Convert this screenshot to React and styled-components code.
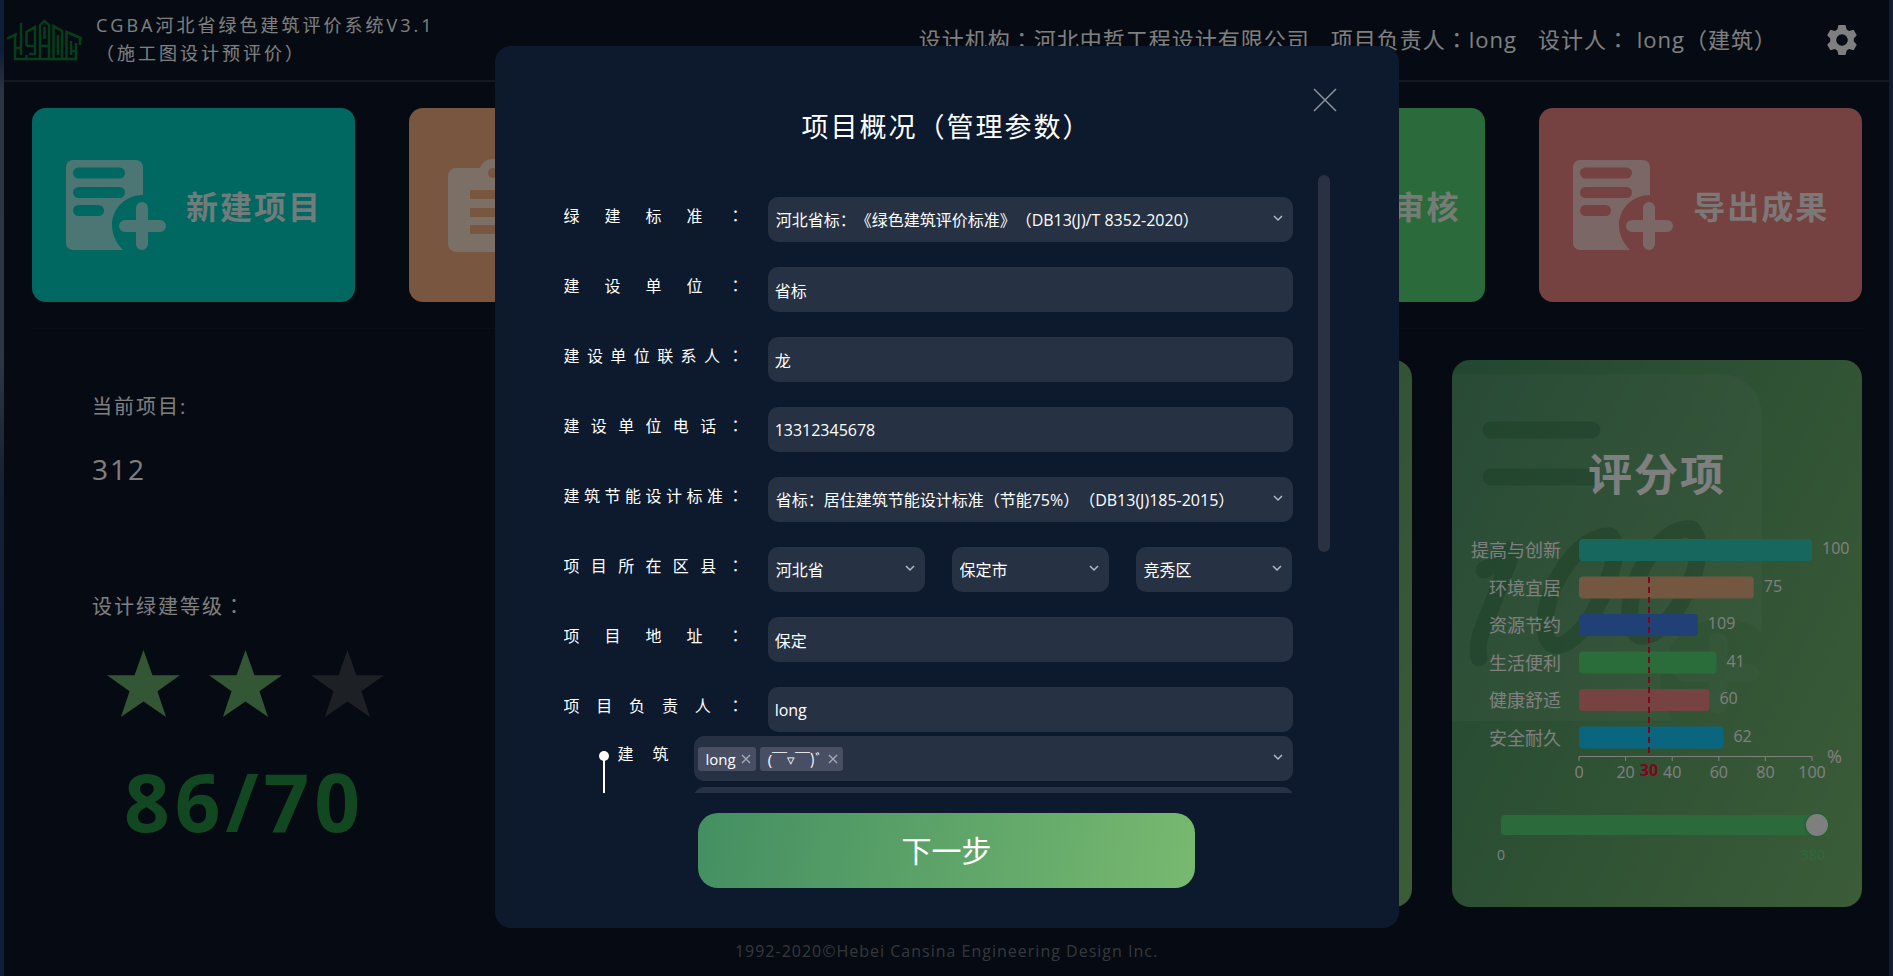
import React, { useState } from "react";
import styled, { createGlobalStyle } from "styled-components";

const GlobalStyle = createGlobalStyle`
  * { box-sizing: border-box; }
  body {
    margin: 0;
    color: #fff;
    background: #0a1426;
    font-family: "Open Sans", "Noto Sans CJK SC", sans-serif;
    font-size: 16px;
    text-spacing-trim: space-all;
  }
  button, input, select { font: inherit; color: inherit; }
  h1, h2, p { margin: 0; font-weight: inherit; }
`;

const Page = styled.div`
  min-height: 100vh;
  padding: 0 4px;
  background:
    linear-gradient(#1c3a70 0, #1c3a70 50px, #56687e 90px, #5c6c84 360px, #2a4468 480px, #203e70 620px) left / 4px 100% no-repeat,
    #1e3862;
`;

const Shell = styled.div`
  display: flex;
  flex-direction: column;
  min-height: 100vh;
  background: #0a1426;
`;

const Header = styled.header`
  display: flex;
  align-items: center;
  height: 82px;
  padding: 0 32px 0 3px;
  border-bottom: 2px solid #2a303c;
`;

const Brand = styled.h1`
  margin-left: 13px;
  font-size: 18px;
  line-height: 27px;
  letter-spacing: 3px;
  padding-bottom: 2px;
`;

const Facts = styled.div`
  display: flex;
  gap: 21px;
  margin-left: auto;
  padding-bottom: 3px;
  font-size: 22px;
  line-height: 32px;
  letter-spacing: 1px;
  white-space: nowrap;
`;

const IconButton = styled.button`
  display: flex;
  padding: 0;
  border: 0;
  background: none;
  cursor: pointer;
`;

const SettingsButton = styled(IconButton)`
  margin-left: 50px;
`;

const Centered = styled.span`
  font-family: "Noto Sans CJK TC", sans-serif;
`;

/* Full-width marks sit in the middle of their cell. */
function Txt({ children }) {
  return children.split(/([（）：])/).map((part, i) =>
    i % 2 ? <Centered key={i}>{part}</Centered> : part
  );
}

const Actions = styled.nav`
  display: flex;
  gap: 54px;
  margin: 26px 27px 0 28px;
  padding-bottom: 26px;
  border-bottom: 1px solid #131c2e;
`;

const ActionCard = styled.button`
  flex: 1 1 0;
  min-width: 0;
  display: flex;
  align-items: center;
  gap: 20px;
  height: 194px;
  padding: 0 0 0 34px;
  border: 0;
  border-radius: 14px;
  background: ${(p) => p.$color};
  color: rgba(255, 255, 255, 0.88);
  font-size: 32px;
  font-weight: 700;
  letter-spacing: 2px;
  white-space: nowrap;
  cursor: pointer;
  svg { flex: none; }
`;

const Board = styled.main`
  display: grid;
  grid-template-columns: minmax(0, 480fr) repeat(3, minmax(0, 410fr));
  gap: 40px;
  margin: 31px 27px 0 28px;
`;

const Summary = styled.section`
  padding: 33px 0 0 60px;
  letter-spacing: 2px;
`;

const Caption = styled.p`
  font-size: 20px;
  line-height: 28px;
`;

const ProjectName = styled.p`
  margin: 28px 0 103px;
  font-size: 28px;
  line-height: 40px;
`;

const Stars = styled.div`
  display: flex;
  gap: 29px;
  margin: 29px 0 0 15px;
`;

const Points = styled.p`
  margin: 44px 0 0 32px;
  color: #249042;
  font-size: 80px;
  font-weight: 700;
  line-height: 80px;
  letter-spacing: 5px;
`;

const ScoreCard = styled.section`
  position: relative;
  height: 547px;
  overflow: hidden;
  border-radius: 18px;
  background: linear-gradient(115deg, #448f62, #78b970);
`;

const Watermark = styled.svg`
  position: absolute;
  left: 0;
  top: 14px;
`;

const ScoreBody = styled.div`
  position: relative;
  padding-top: 84px;
`;

const ScoreTitle = styled.h2`
  font-size: 44px;
  font-weight: 700;
  line-height: 60px;
  letter-spacing: 2px;
  text-align: center;
`;

const Chart = styled.svg`
  display: block;
  width: 100%;
  margin-top: 25px;
  font-size: 16px;
`;

const SliderBox = styled.div`
  margin: 28px 34px 0 49px;
`;

const Range = styled.input`
  display: block;
  width: 100%;
  height: 24px;
  margin: 0;
  appearance: none;
  background: none;
  &::-webkit-slider-runnable-track {
    height: 20px;
    border-radius: 4px;
    background: #56d476;
  }
  &::-webkit-slider-thumb {
    appearance: none;
    width: 22px;
    height: 22px;
    margin-top: -1px;
    border-radius: 50%;
    background: #fff;
    box-shadow: 0 0 2px 1px #40c060;
  }
`;

const RangeEnds = styled.div`
  display: flex;
  justify-content: space-between;
  margin: 8px 3px 0 -4px;
  font-size: 14px;
  line-height: 20px;
`;

const RangeMax = styled.span`
  color: #56d476;
`;

const Footer = styled.footer`
  margin-top: auto;
  padding: 32px 0 14px;
  color: rgba(255, 255, 255, 0.4);
  font-size: 16px;
  line-height: 24px;
  letter-spacing: 1px;
  text-align: center;
`;

const Backdrop = styled.div`
  position: fixed;
  inset: 0;
  display: flex;
  align-items: center;
  justify-content: center;
  padding-bottom: 2px;
  background: rgba(0, 0, 0, 0.5);
`;

const Dialog = styled.form`
  position: relative;
  display: flex;
  flex-direction: column;
  align-items: center;
  width: 904px;
  max-width: 96vw;
  height: 882px;
  max-height: 96vh;
  padding-bottom: 40px;
  border-radius: 16px;
  background: #0d1a2d;
`;

const CloseButton = styled(IconButton)`
  position: absolute;
  right: 62px;
  top: 42px;
`;

const DialogTitle = styled.h2`
  margin: 60px 0 28px;
  font-size: 27px;
  line-height: 40px;
  letter-spacing: 2px;
`;

const ScrollRow = styled.div`
  flex: 1;
  min-height: 0;
  display: flex;
  gap: 25px;
  width: 100%;
  padding: 0 69px;
`;

const Fields = styled.div`
  flex: 1;
  min-width: 0;
  padding-top: 22px;
  overflow: hidden;
`;

const Thumb = styled.div`
  flex: none;
  width: 12px;
  height: 61%;
  border-radius: 6px;
  background: #2a3143;
`;

const Row = styled.div`
  display: flex;
  justify-content: space-between;
  height: 45px;
  margin-bottom: 25px;
`;

const Label = styled.label`
  width: ${(p) => p.$width || 180}px;
  line-height: 36px;
  text-align: justify;
  text-align-last: justify;
  white-space: nowrap;
`;

const Control = styled.div`
  display: flex;
  gap: 27px;
  width: 72%;
`;

const fieldBox = `
  width: 100%;
  height: 45px;
  border: 0;
  border-radius: 10px;
  outline: 0;
  background: #263143;
`;

const TextInput = styled.input`
  ${fieldBox}
  padding: 0 7px;
`;

const SelectWrap = styled.div`
  position: relative;
  flex: 1;
  min-width: 0;
`;

const NativeSelect = styled.select`
  ${fieldBox}
  appearance: none;
  padding: 0 30px 0 8px;
`;

const Arrow = styled.svg`
  position: absolute;
  right: 10px;
  top: 18px;
  pointer-events: none;
`;

const Team = styled.section`
  display: flex;
  justify-content: space-between;
  margin-top: -21px;
  padding-left: 35px;
`;

const Rail = styled.div`
  width: 10px;
  margin-top: 15px;
  background: linear-gradient(#fff, #fff) center / 2px 100% no-repeat;
  &::before {
    content: "";
    display: block;
    width: 10px;
    height: 10px;
    border-radius: 50%;
    background: #fff;
  }
`;

const Members = styled.div`
  flex: 1;
  margin-left: 9px;
  display: flex;
  flex-direction: column;
  gap: 6px;
`;

const MemberRow = styled.div`
  display: flex;
  justify-content: space-between;
`;

const TagField = styled.div`
  ${fieldBox}
  position: relative;
  display: flex;
  align-items: center;
  gap: 4px;
  width: 599px;
  margin-left: auto;
  padding: 0 30px 0 4px;
`;

const Tag = styled.span`
  flex: none;
  display: flex;
  align-items: center;
  gap: 5px;
  height: 24px;
  padding: 0 5px 0 8px;
  border-radius: 3px;
  background: #484f65;
  font-size: 15px;
  line-height: 24px;
  white-space: nowrap;
`;

const TagInput = styled.input`
  flex: 1;
  min-width: 0;
  border: 0;
  outline: 0;
  background: none;
`;

const NextButton = styled.button`
  flex: none;
  width: 55%;
  height: 75px;
  margin-top: 20px;
  border: 0;
  border-radius: 20px;
  background: linear-gradient(100deg, #448f62, #78b970);
  font-size: 30px;
  line-height: 40px;
  cursor: pointer;
`;

function Logo() {
  return (
    <svg width="76" height="42" viewBox="0 0 76 42" fill="none" stroke="#0c7c34" strokeWidth="2.5" aria-hidden="true">
      <path d="M0 19.500L10 15M14 4V36M8 16V40H69V32M8 29H14M19.500 36V41M19.500 27V13L28 8V35H22M19.500 27H28M33 40V6L37.500 2L42 6V40M33 27H42M37.500 8V20M46.500 40V7L55 12V40M51 16V36M59.500 40V13L75 19.500M64 22V36M73 19V26M69 24V32H64" />
    </svg>
  );
}

function GearIcon() {
  return (
    <svg width="30" height="32" viewBox="0 0 30 32" aria-hidden="true">
      <path
        fill="#fff"
        fillRule="evenodd"
        d="M11.5 1h7l1.2 4.6 2.4 1.4 4.5-1.3 3.2 5.6-3 3.2v3l3 3.2-3.2 5.6-4.5-1.3-2.4 1.4-1.2 4.6h-7l-1.2-4.6L7.900 25l-4.500 1.300L.2 20.700l3-3.200v-3l-3-3.200 3.200-5.600L7.900 7l2.400-1.400zM15 10.200a5.800 5.800 0 1 0 0 11.600 5.800 5.800 0 0 0 0-11.600z"
      />
    </svg>
  );
}

function DocPlusIcon({ width = 100 }) {
  return (
    <svg width={width} height="90" viewBox="0 0 100 90" fill="#fff" fillOpacity="0.6" aria-hidden="true">
      <path
        fillRule="evenodd"
        d="M7 0h63a7 7 0 0 1 7 7v28C60 35 46 48 46 65c0 9 4 18 11 25H7a7 7 0 0 1-7-7V7a7 7 0 0 1 7-7zM12.500 7.500a5.500 5.500 0 0 0 0 11h41a5.500 5.500 0 0 0 0-11zM12.500 27a5.500 5.500 0 0 0 0 11h41a5.500 5.500 0 0 0 0-11zM12.500 45a5.500 5.500 0 0 0 0 11h20a5.500 5.500 0 0 0 0-11z"
      />
      <path d="M70 48a6 6 0 0 1 12 0v12h12a6 6 0 0 1 0 12H82v12a6 6 0 0 1-12 0V72H59a6 6 0 0 1 0-12h11z" />
    </svg>
  );
}

function ClipboardIcon() {
  return (
    <svg width="100" height="93" viewBox="-5 0 100 93" fill="#fff" fillOpacity="0.6" aria-hidden="true">
      <path
        fillRule="evenodd"
        d="M8 9h24C34 3 39 0 45 0s11 3 13 9h24a8 8 0 0 1 8 8v68a8 8 0 0 1-8 8H8a8 8 0 0 1-8-8V17a8 8 0 0 1 8-8zM45 9a5 5 0 1 0 0 10 5 5 0 0 0 0-10zM22 31v9h46v-9zM22 49v9h46v-9zM22 66v9h46v-9z"
      />
    </svg>
  );
}

function Star({ on }) {
  return (
    <svg width="73" height="67" viewBox="0 0 220 202" preserveAspectRatio="none" aria-hidden="true">
      <polygon
        fill={on ? "#66ac6a" : "#3b4048"}
        points="110,0 137,76 220,76 152,124 178,202 110,155 42,202 68,124 0,76 83,76"
      />
    </svg>
  );
}

const BARS = [
  { name: "提高与创新", value: 100, share: 100, color: "#2fcebe" },
  { name: "环境宜居", value: 75, share: 75, color: "#e8ae80" },
  { name: "资源节约", value: 109, share: 51, color: "#4080ec" },
  { name: "生活便利", value: 41, share: 59, color: "#56d876" },
  { name: "健康舒适", value: 60, share: 56, color: "#ec8684" },
  { name: "安全耐久", value: 62, share: 62, color: "#14ccff" },
];

function ScoreChart() {
  const x0 = 127;
  const scale = 2.33;
  return (
    <Chart viewBox="0 0 410 256" fill="#fff" role="img" aria-label="各项得分">
      {BARS.map((bar, i) => {
        const y = 10 + i * 37.5;
        return (
          <g key={bar.name}>
            <text x="109" y={y + 18} fontSize="18" textAnchor="end">{bar.name}</text>
            <rect x={x0} y={y} width={bar.share * scale} height="22" rx="4" fill={bar.color} />
            <text x={x0 + bar.share * scale + 10} y={y + 15}>{bar.value}</text>
          </g>
        );
      })}
      <path
        d="M127 232V227.500H360V232M173.600 227V232M220.200 227V232M266.800 227V232M313.400 227V232"
        fill="none"
        stroke="#fff"
      />
      <line x1="197" x2="197" y1="48" y2="227" stroke="#ff0a3c" strokeWidth="2" strokeDasharray="6 4" />
      {[0, 20, 40, 60, 80, 100].map((t) => (
        <text key={t} x={x0 + t * scale} y="249" textAnchor="middle">{t}</text>
      ))}
      <text x="197" y="247" textAnchor="middle" fontWeight="700" fill="#ff0a3c">30</text>
      <text x="375" y="234" fontSize="18">%</text>
    </Chart>
  );
}

function PaperWatermark() {
  return (
    <Watermark width="320" height="350" viewBox="0 0 320 350" aria-hidden="true">
      <path
        fill="#fff"
        fillOpacity="0.07"
        d="M0 0H268A42 42 0 0 1 310 42V258A63 63 0 0 0 222 347H0z"
      />
      <path fill="#fff" fillOpacity="0.05" d="M257 267a9 9 0 0 1 18 0v23h23a9 9 0 0 1 0 18h-23v23a9 9 0 0 1-18 0v-23h-25a9 9 0 0 1 0-18h25z" />
      <g fill="none" stroke="#206838" strokeOpacity="0.3" strokeLinecap="round" strokeWidth="17">
        <path d="M39 56H140M39 103H140" />
        <path d="M32 196Q50 188 62 172Q48 212 30 256Q24 272 27 284" />
        <path d="M158 162C128 160 92 212 93 252C94 286 122 272 142 238C158 208 170 172 158 162" />
        <path d="M240 155C210 150 174 206 178 246C182 276 210 262 230 226C246 196 252 170 240 155" />
      </g>
    </Watermark>
  );
}

function ScorePanel({ title }) {
  const [score, setScore] = useState(380);
  return (
    <ScoreCard>
      <PaperWatermark />
      <ScoreBody>
        <ScoreTitle>{title}</ScoreTitle>
        <ScoreChart />
        <SliderBox>
          <Range type="range" min="0" max="380" value={score} aria-label={title} onChange={(e) => setScore(Number(e.target.value))} />
          <RangeEnds>
            <span>0</span>
            <RangeMax>380</RangeMax>
          </RangeEnds>
        </SliderBox>
      </ScoreBody>
    </ScoreCard>
  );
}

function Chevron() {
  return (
    <Arrow width="10" height="7" viewBox="0 0 10 7" fill="none" stroke="#b4bac4" strokeWidth="1.5" aria-hidden="true">
      <path d="M1 1L5 5L9 1" />
    </Arrow>
  );
}

function Select({ id, label, value }) {
  return (
    <SelectWrap>
      <NativeSelect id={id} aria-label={label}>
        <option>{value}</option>
      </NativeSelect>
      <Chevron />
    </SelectWrap>
  );
}

function Field({ id, label, children }) {
  return (
    <Row>
      <Label htmlFor={id}><Txt>{label + "："}</Txt></Label>
      <Control>{children}</Control>
    </Row>
  );
}

function MemberField({ id, label, tags, ...rest }) {
  return (
    <MemberRow>
      {label && <Label htmlFor={id} $width={51}>{label}</Label>}
      <TagField>
        {tags.map((tag) => (
          <Tag key={tag}>
            {tag}
            <IconButton type="button" aria-label={"移除" + tag}>
              <svg width="10" height="10" viewBox="0 0 10 10" stroke="#a4a9b6" strokeWidth="1.4" aria-hidden="true">
                <path d="M1 1L9 9M9 1L1 9" />
              </svg>
            </IconButton>
          </Tag>
        ))}
        <TagInput id={id} {...rest} />
        <Chevron />
      </TagField>
    </MemberRow>
  );
}

function ProjectDialog() {
  return (
    <Backdrop>
      <Dialog role="dialog" aria-labelledby="dialog-title" onSubmit={(e) => e.preventDefault()}>
        <CloseButton type="button" aria-label="关闭">
          <svg width="24" height="24" viewBox="0 0 24 24" stroke="#8b929c" strokeWidth="1.5" aria-hidden="true">
            <path d="M1 1L23 23M23 1L1 23" />
          </svg>
        </CloseButton>
        <DialogTitle id="dialog-title"><Txt>项目概况（管理参数）</Txt></DialogTitle>
        <ScrollRow>
          <Fields>
            <Field id="standard" label="绿建标准">
              <Select id="standard" value="河北省标：《绿色建筑评价标准》（DB13(J)/T 8352-2020）" />
            </Field>
            <Field id="owner" label="建设单位">
              <TextInput id="owner" defaultValue="省标" />
            </Field>
            <Field id="contact" label="建设单位联系人">
              <TextInput id="contact" defaultValue="龙" />
            </Field>
            <Field id="phone" label="建设单位电话">
              <TextInput id="phone" type="tel" defaultValue="13312345678" />
            </Field>
            <Field id="energy" label="建筑节能设计标准">
              <Select id="energy" value="省标：居住建筑节能设计标准（节能75%）（DB13(J)185-2015）" />
            </Field>
            <Field id="province" label="项目所在区县">
              <Select id="province" value="河北省" />
              <Select id="city" label="市" value="保定市" />
              <Select id="district" label="区县" value="竞秀区" />
            </Field>
            <Field id="address" label="项目地址">
              <TextInput id="address" defaultValue="保定" />
            </Field>
            <Field id="leader" label="项目负责人">
              <TextInput id="leader" defaultValue="long" />
            </Field>
            <Team>
              <Rail />
              <Members>
                <MemberField id="architecture" label="建筑" tags={["long", "(￣▿￣)ﾞ"]} />
                <MemberField id="structure" aria-label="结构" tags={[]} />
              </Members>
            </Team>
          </Fields>
          <Thumb />
        </ScrollRow>
        <NextButton type="submit">下一步</NextButton>
      </Dialog>
    </Backdrop>
  );
}

export default function App() {
  return (
    <>
      <GlobalStyle />
      <Page>
        <Shell>
          <Header>
            <Logo />
            <Brand>
              CGBA河北省绿色建筑评价系统V3.1
              <br />
              <Txt>（施工图设计预评价）</Txt>
            </Brand>
            <Facts>
              <span><Txt>设计机构：河北中哲工程设计有限公司</Txt></span>
              <span><Txt>项目负责人：long</Txt></span>
              <span><Txt>设计人： long（建筑）</Txt></span>
            </Facts>
            <SettingsButton type="button" aria-label="设置"><GearIcon /></SettingsButton>
          </Header>
          <Actions>
            <ActionCard type="button" $color="#00d0c0"><DocPlusIcon />新建项目</ActionCard>
            <ActionCard type="button" $color="#f0ac80" aria-label="打开项目"><ClipboardIcon /></ActionCard>
            <ActionCard type="button" $color="#4080ec" aria-label="项目概况"><ClipboardIcon /></ActionCard>
            <ActionCard type="button" $color="#56d476"><DocPlusIcon width={108} />提交审核</ActionCard>
            <ActionCard type="button" $color="#ea8482"><DocPlusIcon />导出成果</ActionCard>
          </Actions>
          <Board>
            <Summary>
              <Caption>当前项目:</Caption>
              <ProjectName>312</ProjectName>
              <Caption><Txt>设计绿建等级：</Txt></Caption>
              <Stars role="img" aria-label="二星级">
                <Star on />
                <Star on />
                <Star />
              </Stars>
              <Points>86/70</Points>
            </Summary>
            <ScoreCard />
            <ScoreCard />
            <ScorePanel title="评分项" />
          </Board>
          <Footer>1992-2020©Hebei Cansina Engineering Design Inc.</Footer>
        </Shell>
      </Page>
      <ProjectDialog />
    </>
  );
}
